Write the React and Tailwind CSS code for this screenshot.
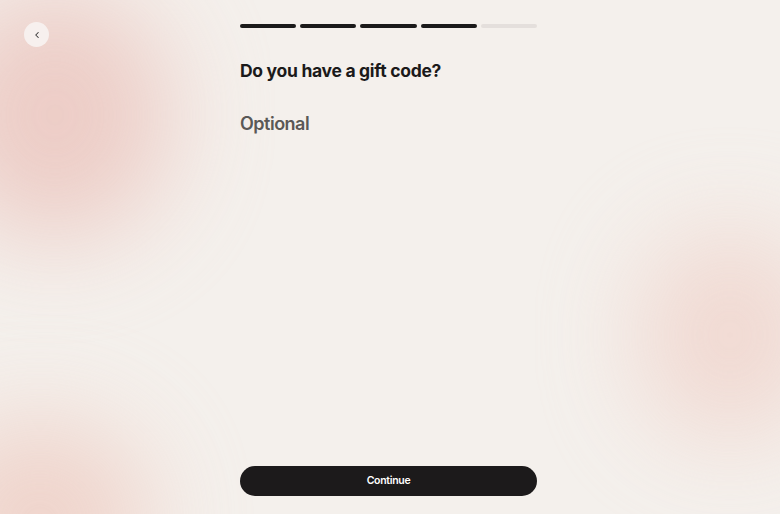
import { ChevronLeft } from "lucide-react";

const steps = [true, true, true, true, false];

export default function App() {
  return (
    <div className="relative h-[514px] w-full overflow-hidden bg-[#f4f0ec] font-['Inter',sans-serif]">
      {/* soft background blobs */}
      <div className="pointer-events-none absolute left-[-60px] top-[-10px] h-[250px] w-[230px] rounded-full bg-[#ebc4bd] opacity-80 blur-[50px]" />
      <div className="pointer-events-none absolute left-[-70px] top-[420px] h-[200px] w-[220px] rounded-full bg-[#eecac0] opacity-75 blur-[50px]" />
      <div className="pointer-events-none absolute left-[640px] top-[230px] h-[210px] w-[180px] rounded-full bg-[#f0d3cb] opacity-80 blur-[50px]" />

      {/* back button */}
      <button className="absolute left-[24px] top-[22px] flex h-[25px] w-[25px] items-center justify-center rounded-full bg-[#f7f0ee]">
        <ChevronLeft className="h-[10px] w-[10px] text-[#333]" strokeWidth={2.5} />
      </button>

      <div className="relative mx-auto flex h-full w-[300px] flex-col pr-[3px] pt-[24px] pb-[18px]">
        <div className="flex gap-[4px]">
          {steps.map((on, i) => (
            <div
              key={i}
              className={on ? "h-[4px] flex-1 rounded-full bg-[#1b1a1a]" : "h-[4px] flex-1 rounded-full bg-[#e4dfdc]"}
            />
          ))}
        </div>

        <h1 className="mt-[31px] text-[17.5px] font-bold leading-[24px] tracking-[-0.3px] text-[#1b1a1a]">
          Do you have a gift code?
        </h1>

        <p className="mt-[29px] text-[18px] font-semibold leading-[24px] tracking-[-0.5px] text-[#5a5856]">
          Optional
        </p>

        <div className="flex-1" />

        <button className="h-[30px] w-full rounded-full bg-[#1c1a1b] text-[10.5px] font-semibold tracking-[-0.3px] text-white">
          Continue
        </button>
      </div>
    </div>
  );
}
